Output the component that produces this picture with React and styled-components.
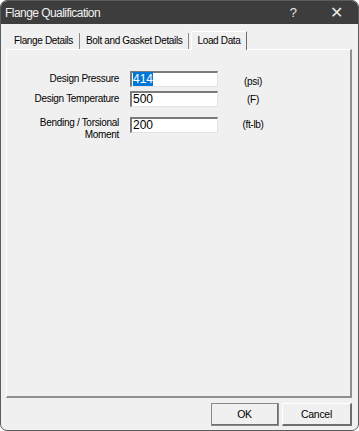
import React from "react";
import styled, { createGlobalStyle } from "styled-components";

const GlobalStyle = createGlobalStyle`
  html, body { margin: 0; padding: 0; background: #ffffff; }
  body { font-family: "Liberation Sans", Arial, sans-serif; }
`;

const Window = styled.div`
  width: 359px; height: 431px;
  box-sizing: border-box;
  display: flex; flex-direction: column;
  background: #f0f0f0;
  border: 1px solid #5c5c5c;
  border-radius: 7px;
  overflow: hidden;
`;

const TitleBar = styled.div`
  height: 23px; flex: none;
  display: flex; align-items: center;
  background: #3d3d3d; color: #f2f2f2;
  padding-left: 4px;
  font-size: 12px;
  letter-spacing: -0.55px;
`;

const Title = styled.span`
  flex: 1;
`;

const TitleButton = styled.span`
  width: ${(p) => p.w}px;
  margin-right: ${(p) => p.mr || 0}px;
  text-align: center;
  font-size: ${(p) => p.size}px;
  color: #e8e8e8;
`;

const Body = styled.div`
  flex: 1;
  display: flex; flex-direction: column;
  padding: 6px 5px 0 5px;
`;

const TabRow = styled.div`
  display: flex; align-items: flex-end;
  height: 19px;
  padding-left: 2px;
`;

const Tab = styled.div`
  font-size: 10px; color: #000;
  letter-spacing: -0.35px;
  padding: 0 6px 0 ${(p) => (p.active ? 5 : 6)}px;
  height: ${(p) => (p.active ? 19 : 16)}px;
  line-height: ${(p) => (p.active ? 17 : 16)}px;
  box-sizing: border-box;
  border-right: 1px solid ${(p) => (p.active ? "#6d6d6d" : "#8a8a8a")};
  border-left: ${(p) => (p.active ? "1px solid #ffffff" : "none")};
  border-top: ${(p) => (p.active ? "1px solid #ffffff" : "none")};
  margin-left: ${(p) => (p.active ? 2 : 0)}px;
  background: #f0f0f0;
  margin-bottom: ${(p) => (p.active ? -1 : 0)}px;
  position: relative;
  z-index: ${(p) => (p.active ? 1 : 0)};
`;

const Panel = styled.div`
  flex: 1;
  box-sizing: border-box;
  margin-right: 1px;
  border-top: 1px solid #ffffff;
  border-left: 1px solid #ffffff;
  border-right: 2px solid #8f8f8f;
  border-bottom: 2px solid #8f8f8f;
  padding-top: 21px;
`;

const Form = styled.div`
  display: grid;
  grid-template-columns: 112px 88px 48px;
  column-gap: 11px;
  row-gap: 4px;
  align-items: start;
`;

const Label = styled.div`
  font-size: 10px; color: #000;
  letter-spacing: -0.3px;
  text-align: right;
  line-height: 12px;
  padding-top: ${(p) => p.pt || 0}px;
`;

const EditBox = styled.div`
  height: 16px; box-sizing: border-box;
  background: #ffffff;
  border-top: 2px solid #7a7a7a;
  border-left: 2px solid #7a7a7a;
  border-right: 1px solid #e3e3e3;
  border-bottom: 1px solid #e3e3e3;
  font-size: 12px; line-height: 13px;
  padding-left: 1px;
  margin-top: ${(p) => p.mt || 0}px;
`;

const Selected = styled.span`
  background: #0078d7; color: #ffffff;
`;

const Unit = styled.div`
  font-size: 10px; color: #000;
  letter-spacing: -0.3px;
  text-align: center;
  padding-top: ${(p) => p.pt || 5}px;
`;

const Footer = styled.div`
  height: 32px; flex: none;
  display: flex; justify-content: flex-end; align-items: flex-start;
  gap: 3px;
  padding: 5px 1px 0 0;
  box-sizing: border-box;
`;

const Button = styled.button`
  width: ${(p) => p.w}px; height: 23px;
  font-family: "Liberation Sans", Arial, sans-serif;
  font-size: 10.5px; color: #000;
  letter-spacing: -0.3px;
  background: #f0f0f0;
  border-top: 1px solid #ffffff;
  border-left: 1px solid #ffffff;
  border-right: 2px solid #6e6e6e;
  border-bottom: 2px solid #6e6e6e;
  outline: ${(p) => (p.primary ? "1px solid #8a8a8a" : "none")};
  outline-offset: -1px;
  padding: 0;
`;

export default function App() {
  return (
    <>
      <GlobalStyle />
      <Window>
        <TitleBar>
          <Title>Flange Qualification</Title>
          <TitleButton w={20} mr={11} size={13}>?</TitleButton>
          <TitleButton w={44} size={16}>✕</TitleButton>
        </TitleBar>
        <Body>
          <TabRow>
            <Tab>Flange Details</Tab>
            <Tab>Bolt and Gasket Details</Tab>
            <Tab active>Load Data</Tab>
          </TabRow>
          <Panel>
            <Form>
              <Label pt={2}>Design Pressure</Label>
              <EditBox><Selected>414</Selected></EditBox>
              <Unit>(psi)</Unit>
              <Label pt={2}>Design Temperature</Label>
              <EditBox>500</EditBox>
              <Unit pt={3}>(F)</Unit>
              <Label pt={6}>Bending / Torsional<br />Moment</Label>
              <EditBox mt={6}>200</EditBox>
              <Unit pt={8}>(ft-lb)</Unit>
            </Form>
          </Panel>
          <Footer>
            <Button w={68} primary>OK</Button>
            <Button w={70}>Cancel</Button>
          </Footer>
        </Body>
      </Window>
    </>
  );
}
